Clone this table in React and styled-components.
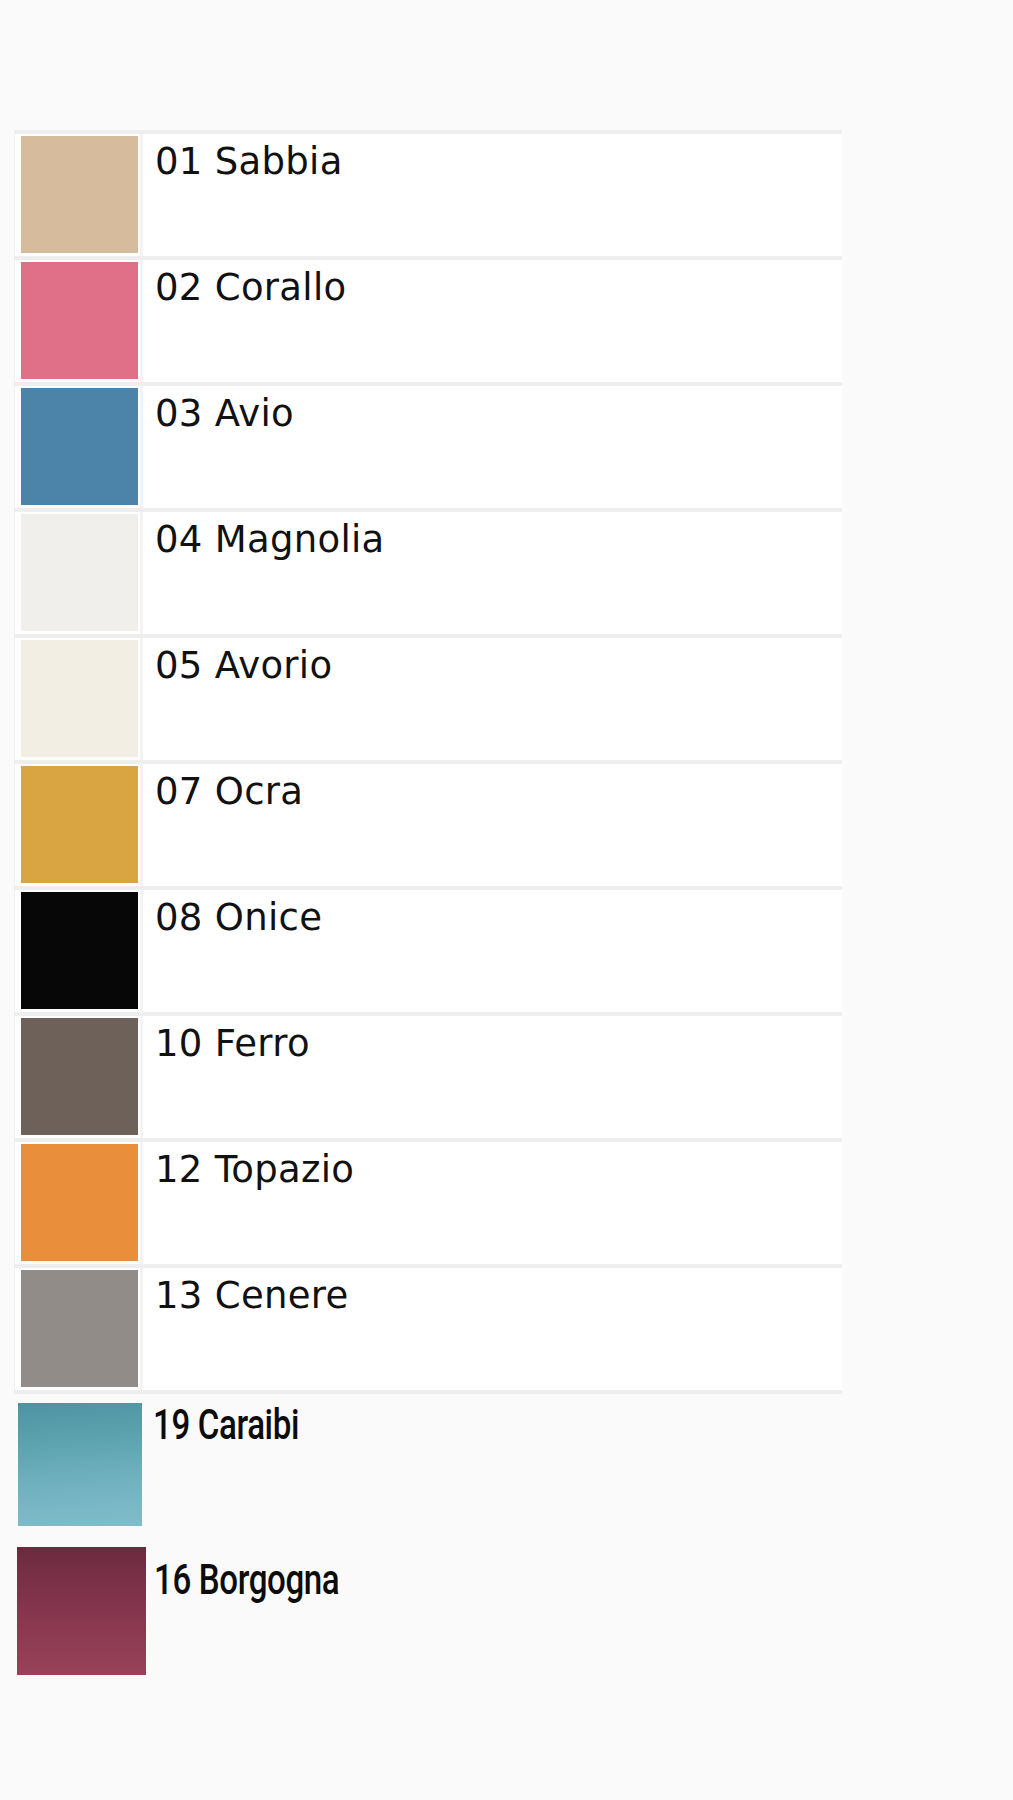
import React from 'react';
import styled, { createGlobalStyle } from 'styled-components';

const GlobalStyle = createGlobalStyle`
  html, body {
    margin: 0;
    padding: 0;
    background: #fafafa;
  }
`;

const Page = styled.div`
  min-height: 1800px;
  padding-top: 130px;
  box-sizing: border-box;
  background: #fafafa;
`;

const Table = styled.div`
  margin-left: 14px;
  width: 828px;
  background: #fff;
  border-top: 4px solid #eeeeee;
  border-left: 1px solid #f0f0f0;
  box-sizing: border-box;
`;

const Row = styled.div`
  display: flex;
  align-items: stretch;
  height: 122px;
  border-bottom: 4px solid #eeeeee;
`;

const SwatchCell = styled.div`
  padding: 2px 2px 0 6px;
`;

const Swatch = styled.div`
  width: 117px;
  height: 117px;
  background: ${(p) => p.$color};
`;

const NameCell = styled.div`
  flex: 1;
  border-left: 3px solid #f3f3f3;
  padding: 9px 0 0 12px;
  font-family: "DejaVu Sans", "Noto Sans", sans-serif;
  font-size: 37px;
  line-height: 1;
  letter-spacing: 0.3px;
  color: #111;
`;

const Extra = styled.div`
  display: flex;
  flex-direction: column;
  gap: 21px;
  margin-top: 9px;
`;

const ExtraRow = styled.div`
  display: flex;
  align-items: flex-start;
  margin-left: ${(p) => p.$left}px;
`;

const BigSwatch = styled.div`
  width: ${(p) => p.$w}px;
  height: ${(p) => p.$h}px;
  background: ${(p) => p.$bg};
  flex-shrink: 0;
`;

// condensed lettering: no narrow face is installed, so squeeze Roboto
const ExtraName = styled.span`
  display: inline-block;
  margin-left: ${(p) => p.$gap}px;
  margin-top: ${(p) => p.$offset}px;
  font-family: "Roboto", "Liberation Sans", sans-serif;
  font-weight: 500;
  font-size: 43px;
  line-height: 1;
  letter-spacing: -0.5px;
  color: #0c0c0c;
  transform: scaleX(0.77);
  transform-origin: left top;
  white-space: nowrap;
`;

const colours = [
  { name: '01 Sabbia', color: '#d6bc9c' },
  { name: '02 Corallo', color: '#e06f88' },
  { name: '03 Avio', color: '#4b83a9' },
  { name: '04 Magnolia', color: '#f1efeb' },
  { name: '05 Avorio', color: '#f2eee3' },
  { name: '07 Ocra', color: '#d8a542' },
  { name: '08 Onice', color: '#070707' },
  { name: '10 Ferro', color: '#6e6159' },
  { name: '12 Topazio', color: '#e98f3b' },
  { name: '13 Cenere', color: '#918c88' },
];

const extras = [
  {
    name: '19 Caraibi',
    bg: 'linear-gradient(175deg, #4d93a2 0%, #5ba1ae 30%, #6fb0be 60%, #81bdcb 100%)',
    w: 124,
    h: 123,
    left: 18,
    gap: 11,
    offset: 0,
  },
  {
    name: '16 Borgogna',
    bg: 'linear-gradient(180deg, #6c2a3e 0%, #83354d 45%, #984259 100%)',
    w: 129,
    h: 128,
    left: 17,
    gap: 8,
    offset: 11,
  },
];

export default function App() {
  return (
    <Page>
      <GlobalStyle />
      <Table>
        {colours.map((c) => (
          <Row key={c.name}>
            <SwatchCell>
              <Swatch $color={c.color} />
            </SwatchCell>
            <NameCell>{c.name}</NameCell>
          </Row>
        ))}
      </Table>
      <Extra>
        {extras.map((e) => (
          <ExtraRow key={e.name} $left={e.left}>
            <BigSwatch $bg={e.bg} $w={e.w} $h={e.h} />
            <ExtraName $gap={e.gap} $offset={e.offset}>
              {e.name}
            </ExtraName>
          </ExtraRow>
        ))}
      </Extra>
    </Page>
  );
}
